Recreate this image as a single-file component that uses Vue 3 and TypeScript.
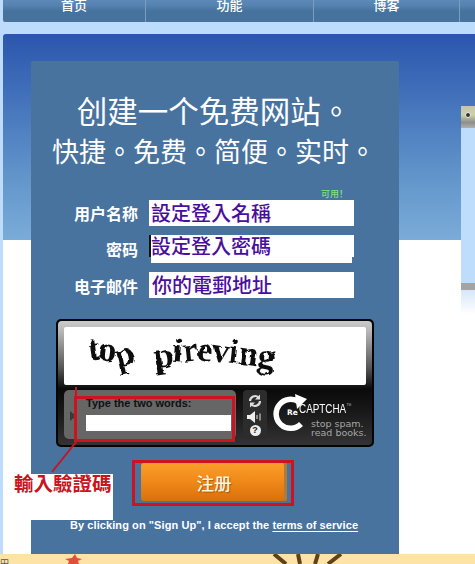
<script setup lang="ts">
const navItems = [
  { label: '首页', width: 143 },
  { label: '功能', width: 168 },
  { label: '博客', width: 146 },
  { label: '', width: 15 },
]
const fields = [
  { label: '用户名称', value: '設定登入名稱', cls: 'f1' },
  { label: '密码', value: '設定登入密碼', cls: 'f2' },
  { label: '电子邮件', value: '你的電郵地址', cls: 'f3' },
]
const word1 = [
  { c: 't', r: -8, y: 0 }, { c: 'o', r: 6, y: 1 }, { c: 'p', r: -12, y: 6 },
]
const word2 = [
  { c: 'p', r: -8, y: 5 }, { c: 'i', r: 4, y: 0 }, { c: 'r', r: -6, y: -1 }, { c: 'e', r: 6, y: -1 },
  { c: 'v', r: 8, y: 0 }, { c: 'i', r: 6, y: 1 }, { c: 'n', r: 8, y: 3 }, { c: 'g', r: 10, y: 6 },
]
function letter(l: { r: number; y: number }) {
  return { transform: `translateY(${l.y}px) rotate(${l.r}deg)` }
}
</script>

<template>
  <div class="page">
    <nav class="nav">
      <div
        v-for="(n, i) in navItems"
        :key="i"
        class="nav-item"
        :style="{ width: n.width + 'px' }"
      >{{ n.label }}</div>
    </nav>

    <main class="main">
      <section class="panel">
        <h1 class="t1">创建一个免费网站。</h1>
        <h2 class="t2">快捷。免费。简便。实时。</h2>

        <div class="avail">可用！</div>
        <div class="form">
          <template v-for="f in fields" :key="f.label">
            <label class="lab" :class="f.cls">{{ f.label }}</label>
            <div class="field" :class="f.cls">
              <div class="field-box">{{ f.value }}</div>
            </div>
          </template>
        </div>

        <div class="captcha">
          <div class="rim">
            <div class="img">
              <svg class="filters" width="0" height="0">
                <filter id="rough" x="-5%" y="-5%" width="110%" height="110%">
                  <feTurbulence type="fractalNoise" baseFrequency="0.12" numOctaves="2" seed="4" />
                  <feDisplacementMap in="SourceGraphic" scale="4" />
                </filter>
              </svg>
              <div class="words">
                <span class="word w1"><span v-for="(l, i) in word1" :key="i" class="ch" :style="letter(l)">{{ l.c }}</span></span>
                <span class="word w2"><span v-for="(l, i) in word2" :key="i" class="ch" :style="letter(l)">{{ l.c }}</span></span>
              </div>
            </div>
            <div class="cap-row">
              <div class="cap-input">
                <div class="cap-label">Type the two words:</div>
                <div class="cap-box"></div>
                <i class="cap-tri"></i>
              </div>
              <div class="cap-ctrl">
                <svg width="16" height="14" viewBox="0 0 16 14">
                  <path d="M3 7a5 5 0 0 1 8.500-3.500" fill="none" stroke="#ddd" stroke-width="2.200" />
                  <path d="M13 0.500v5h-5z" fill="#ddd" />
                  <path d="M13 7a5 5 0 0 1-8.500 3.500" fill="none" stroke="#ddd" stroke-width="2.200" />
                  <path d="M3 13.500v-5h5z" fill="#ddd" />
                </svg>
                <svg width="16" height="12" viewBox="0 0 16 12">
                  <path d="M0 4h3l5-4v12l-5-4H0z" fill="#eee" />
                  <path d="M10 4v4M13 2.500v7" stroke="#bbb" stroke-width="1.300" />
                </svg>
                <div class="help">?</div>
              </div>
              <div class="cap-logo">
                <svg class="ring" width="38" height="40" viewBox="0 0 38 40">
                  <path d="M26 8A14.500 14.500 0 1 0 28 30" fill="none" stroke="#fff" stroke-width="5.500" />
                  <path d="M22 0l12 5-10 10z" fill="#fff" />
                </svg>
                <span class="re">Re</span>
                <span class="cap-name">CAPTCHA<sup>™</sup></span>
                <span class="slogan">stop spam.<br />read books.</span>
              </div>
            </div>
          </div>
        </div>

        <button class="signup" type="button">注册</button>
        <p class="terms">By clicking on "Sign Up", I accept the <a class="tos">terms of service</a></p>
      </section>

      <aside class="thumb">
        <div class="thumb-head"><i></i></div>
        <div class="thumb-body"></div>
        <div class="thumb-foot"></div>
        <div class="thumb-fade"></div>
      </aside>
    </main>

    <footer class="foot">
      <span class="corner">田</span>
      <svg class="deco" width="475" height="10" viewBox="0 0 475 10">
        <path d="M65 5l7-1 3-4 2 4 5 1-4 2 1 3H68l1-3z" fill="#e04f3a" />
        <path d="M274 0l12 10M298 0l2 10M318 0l-3 10M341 0l-13 10" stroke="#5f4318" stroke-width="4" fill="none" />
      </svg>
    </footer>

    <!-- hand-drawn annotations lying over the screenshot -->
    <div class="note-bg"></div>
    <div class="note-text">輸入驗證碼</div>
    <div class="mark mark-cap"></div>
    <div class="mark mark-btn"></div>
    <svg class="arrow" width="40" height="100" viewBox="0 0 40 100">
      <path d="M30 0V55L6 85" fill="none" stroke="#c8141e" stroke-width="2" />
    </svg>
  </div>
</template>

<style>
html, body { margin: 0; padding: 0; }
</style>

<style scoped>
.page {
  position: relative;
  width: 475px;
  height: 564px;
  overflow: hidden;
  background: #bddcfb;
  font-family: "Noto Sans CJK SC", "Liberation Sans", sans-serif;
}
.nav {
  display: flex;
  margin-left: 3px;
  height: 22px;
  background: linear-gradient(#5c89b8 0, #5582b0 25%, #46729e 50%, #46729e 100%);
  border-radius: 0 0 0 2px;
}
.nav-item {
  flex: none;
  box-sizing: border-box;
  height: 22px;
  border-right: 1px solid #7b9dc0;
  color: #fff;
  font-size: 13px;
  font-weight: 500;
  line-height: 10px;
  text-align: center;
}
.nav-item:last-child { border-right: 0; }

.main {
  display: flex;
  margin: 12px 0 0 3px;
  height: 520px;
  border-radius: 3px 0 0 0;
  background: linear-gradient(#2b56ad 0, #3e6cb8 25%, #6296cb 70%, #7bacd8 100%) 0 0 / 100% 206px no-repeat, #fff;
}
.panel {
  flex: none;
  width: 368px;
  margin: 27px 0 0 28px;
  box-sizing: border-box;
  background: #48739f;
  border-radius: 2px 2px 0 0;
  color: #fff;
}
.t1, .t2 {
  margin: 0;
  font-family: "Noto Sans CJK TC", sans-serif;
  font-weight: 400;
  text-align: center;
  white-space: nowrap;
}
.t1 { font-size: 30.500px; line-height: 40px; padding-top: 29px; padding-right: 2px; }
.t2 { font-size: 27px; line-height: 40px; margin-top: 1px; padding-right: 2px; }

.avail {
  margin: 17px 0 0 290px;
  height: 11px;
  line-height: 11px;
  font-size: 9px;
  font-weight: 700;
  color: #74d67e;
  white-space: nowrap;
}
.form {
  display: grid;
  grid-template-columns: 107px 205px;
  grid-template-rows: 26px 28px 26px;
  column-gap: 11px;
  row-gap: 9px;
  margin-top: 1px;
}
.lab {
  font-size: 16px;
  font-weight: 700;
  text-align: right;
  line-height: 27px;
  white-space: nowrap;
}
.lab.f2 { line-height: 28px; }
.lab.f3 { line-height: 28px; }
.field { position: relative; }
.field-box {
  height: 26px;
  background: #fff;
  color: #4a0e9c;
  font-family: "Noto Sans CJK TC", sans-serif;
  font-size: 20px;
  font-weight: 500;
  line-height: 26px;
  padding-left: 2px;
  white-space: nowrap;
  overflow: hidden;
}
.field.f2 .field-box {
  height: 22px;
  line-height: 22px;
  border-left: 2px solid #111;
  padding-left: 0;
  background-clip: padding-box;
}
.field.f2::after {
  content: "";
  display: block;
  height: 6px;
  margin: 0 2px;
  background: #fff;
}
.field.f3 .field-box { padding-left: 3px; }

.captcha {
  box-sizing: border-box;
  width: 318px;
  height: 128px;
  margin: 21px 0 0 25px;
  padding: 2px;
  background: #050505;
  border-radius: 5px;
}
.rim {
  box-sizing: border-box;
  height: 124px;
  padding: 6px 6px 0;
  border-radius: 4px;
  background: linear-gradient(#cbcbcb 0, #b8b8b8 8%, #555 38%, #0a0a0a 55%, #1a1a1a 75%, #333 100%);
}
.img {
  height: 58px;
  background: #fff;
  border-radius: 2px;
  position: relative;
  overflow: hidden;
  color: #111;
  font-family: "Liberation Serif", serif;
  font-weight: 700;
}
.filters { position: absolute; }
.words {
  position: absolute;
  inset: 0;
  filter: url(#rough);
}
.word {
  position: absolute;
  white-space: nowrap;
  font-size: 35px;
  line-height: 40px;
}
.w1 { left: 24px; top: 2px; letter-spacing: -1px; }
.w2 { left: 90px; top: 4px; letter-spacing: -0.500px; }
.ch { display: inline-block; }

.cap-row {
  display: flex;
  margin-top: 5px;
  height: 49px;
}
.cap-input {
  position: relative;
  box-sizing: border-box;
  width: 172px;
  height: 49px;
  padding: 7px 5px 0 22px;
  background: #666;
  border-radius: 5px;
}
.cap-label {
  font-family: "Liberation Sans", sans-serif;
  font-weight: 700;
  font-size: 11px;
  line-height: 13px;
  color: #111;
  white-space: nowrap;
}
.cap-box {
  margin-top: 5px;
  height: 16px;
  background: #fff;
}
.cap-tri {
  position: absolute;
  left: 6px;
  top: 21px;
  border-left: 6px solid #3a3a3a;
  border-top: 5px solid transparent;
  border-bottom: 5px solid transparent;
}
.cap-ctrl {
  box-sizing: border-box;
  width: 24px;
  height: 49px;
  margin-left: 7px;
  padding: 4px 0 3px;
  border-radius: 4px;
  background: #2c2c2c;
  display: flex;
  flex-direction: column;
  align-items: center;
  justify-content: space-between;
}
.help {
  width: 11px;
  height: 11px;
  border-radius: 50%;
  background: #eee;
  color: #222;
  font: 700 9px/11px "Liberation Sans", sans-serif;
  text-align: center;
}
.cap-logo {
  position: relative;
  flex: 1;
  color: #fff;
  font-family: "Liberation Sans", sans-serif;
}
.ring { position: absolute; left: 6px; top: 4px; }
.re {
  position: absolute;
  left: 20px;
  top: 18px;
  font: 700 7.500px/10px "DejaVu Sans", sans-serif;
}
.cap-name {
  position: absolute;
  left: 32px;
  top: 11px;
  font-size: 13px;
  line-height: 16px;
  white-space: nowrap;
  transform: scaleX(0.76);
  transform-origin: left center;
}
.cap-name sup { font-size: 7px; line-height: 0; color: #999; }
.slogan {
  position: absolute;
  left: 44px;
  top: 29px;
  font: 400 9.500px/9px "DejaVu Sans", sans-serif;
  color: #a6a6a6;
  white-space: nowrap;
}

.signup {
  display: block;
  width: 146px;
  height: 38px;
  margin: 16px 0 0 110px;
  padding: 0;
  border: 0;
  border-radius: 3px;
  background: linear-gradient(#fb9e2a 0, #f18a1a 45%, #d9700c 100%);
  box-shadow: inset -4px 0 0 -1px #b07a3a, 0 1px 0 #5d6f80;
  color: #fff4de;
  font-family: "Noto Sans CJK SC", sans-serif;
  font-size: 17.500px;
  font-weight: 500;
  text-shadow: 1px 1px 1px #a35a10;
}
.terms {
  margin: 17px 0 0 39px;
  font: 700 11px/14px "Liberation Sans", sans-serif;
  white-space: nowrap;
  letter-spacing: 0.08px;
}
.tos {
  color: #fff;
  text-decoration: underline;
  text-underline-offset: 2px;
}

.thumb {
  flex: none;
  width: 14px;
  margin: 72px 0 0 62px;
  display: flex;
  flex-direction: column;
}
.thumb-head {
  position: relative;
  height: 22px;
  background: linear-gradient(#c4c4b4 0, #cdd2a4 40%, #8e8e8e 75%, #b0b0ac 100%);
}
.thumb-head i {
  position: absolute;
  left: 4px;
  top: 6px;
  width: 4px;
  height: 4px;
  background: #333;
  border: 1px solid #eee;
  border-radius: 50%;
}
.thumb-body { height: 155px; background: #bedcfb; }
.thumb-foot { height: 7px; background: #a4a4a4; }
.thumb-fade { height: 24px; background: linear-gradient(#d6e6fb, #fff); }

.foot {
  position: relative;
  height: 10px;
  background: #fde4a6;
}
.corner {
  position: absolute;
  left: 0;
  top: 5px;
  font-size: 9px;
  line-height: 9px;
  color: #555;
}
.deco { position: absolute; left: 0; top: 0; }

.note-bg {
  position: absolute;
  left: 31px;
  top: 474px;
  width: 82px;
  height: 46px;
  background: #fff;
}
.note-text {
  position: absolute;
  left: 14px;
  top: 471px;
  font-family: "Noto Sans CJK TC", sans-serif;
  font-size: 19.500px;
  line-height: 24px;
  font-weight: 700;
  color: #c8141e;
  white-space: nowrap;
}
.mark {
  position: absolute;
  box-sizing: border-box;
  border: 3px solid #ce1220;
}
.mark-cap { left: 74px; top: 396px; width: 161px; height: 46px; }
.mark-btn { left: 132px; top: 460px; width: 162px; height: 46px; }
.arrow { position: absolute; left: 46px; top: 387px; }
</style>
